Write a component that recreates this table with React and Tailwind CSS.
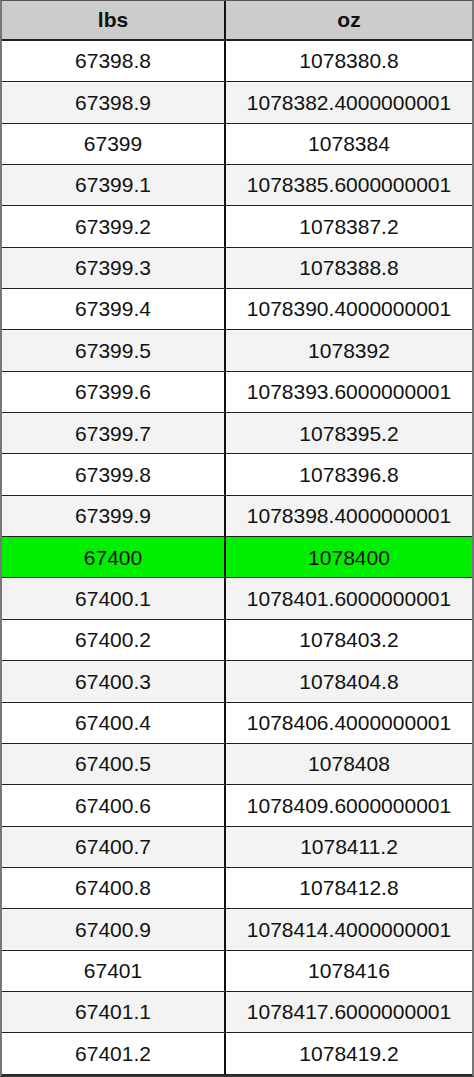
import React from "react";

const rows = [
  ["67398.8", "1078380.8"],
  ["67398.9", "1078382.4000000001"],
  ["67399", "1078384"],
  ["67399.1", "1078385.6000000001"],
  ["67399.2", "1078387.2"],
  ["67399.3", "1078388.8"],
  ["67399.4", "1078390.4000000001"],
  ["67399.5", "1078392"],
  ["67399.6", "1078393.6000000001"],
  ["67399.7", "1078395.2"],
  ["67399.8", "1078396.8"],
  ["67399.9", "1078398.4000000001"],
  ["67400", "1078400"],
  ["67400.1", "1078401.6000000001"],
  ["67400.2", "1078403.2"],
  ["67400.3", "1078404.8"],
  ["67400.4", "1078406.4000000001"],
  ["67400.5", "1078408"],
  ["67400.6", "1078409.6000000001"],
  ["67400.7", "1078411.2"],
  ["67400.8", "1078412.8"],
  ["67400.9", "1078414.4000000001"],
  ["67401", "1078416"],
  ["67401.1", "1078417.6000000001"],
  ["67401.2", "1078419.2"],
];

export default function App() {
  return (
    <div className="w-[474px] h-[1077px] bg-white overflow-hidden font-['Liberation_Sans',Arial,sans-serif] text-[#111] text-[21px]">
      <div className="border-x-2 border-t border-b-2 border-x-[#777] border-t-[#555] border-b-[#333]">
        <div className="grid grid-cols-[224px_1fr] h-[40px] bg-[#cccccc] border-b-2 border-[#222] font-bold">
          <div className="flex items-center justify-center border-r-2 border-[#111]">lbs</div>
          <div className="flex items-center justify-center">oz</div>
        </div>
        {rows.map(([a, b], i) => {
          const hl = a === "67400";
          const bg = hl ? "bg-[#00ee00]" : i % 2 === 1 ? "bg-[#f3f3f3]" : "bg-white";
          return (
            <div
              key={a}
              className={`grid grid-cols-[224px_1fr] h-[41.35px] border-b border-[#222] ${bg}`}
            >
              <div className="flex items-center justify-center border-r-2 border-[#111]">{a}</div>
              <div className="flex items-center justify-center">{b}</div>
            </div>
          );
        })}
      </div>
    </div>
  );
}
